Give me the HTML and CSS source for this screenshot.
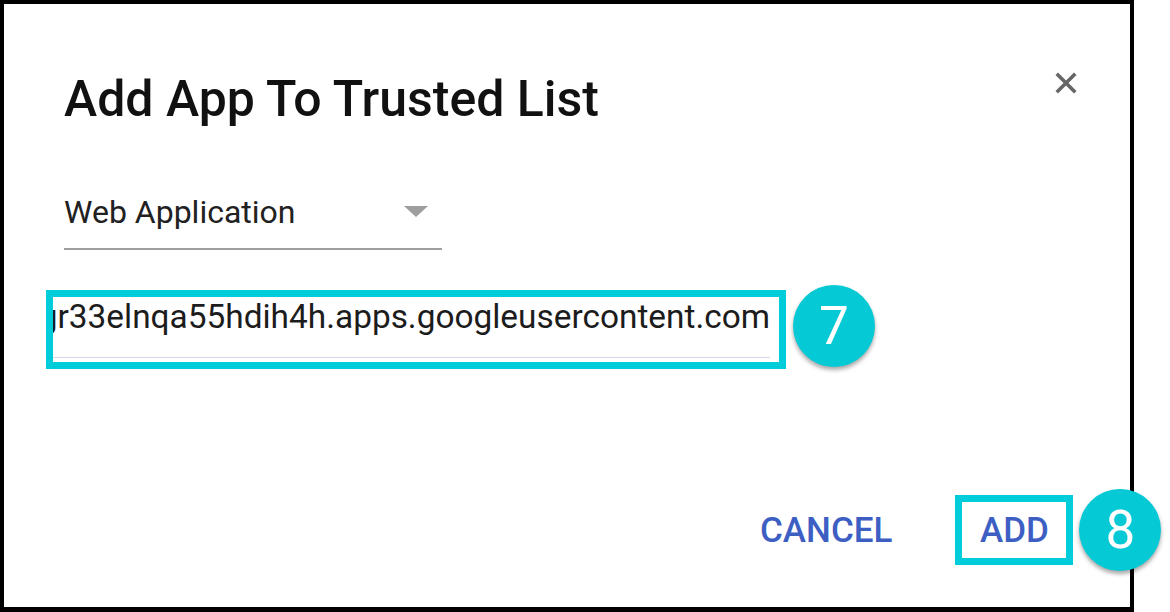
FILE: index.html
```html
<!DOCTYPE html>
<html lang="en">
<head>
  <meta charset="UTF-8" />
  <meta name="viewport" content="width=device-width, initial-scale=1.0"/>
  <title>Add App To Trusted List</title>
  <link rel="stylesheet" href="styles.css">
</head>
<body>
  <div class="frame">
    <div class="dialog-head">
      <h1>Add App To Trusted List</h1>
      <button class="close" aria-label="Close">
        <svg width="22" height="22" viewBox="0 0 22 22">
          <path d="M3 3 L19 19 M19 3 L3 19" stroke="#666" stroke-width="3.6" stroke-linecap="square"/>
        </svg>
      </button>
    </div>

    <div class="select">
      <span>Web Application</span>
      <span class="arrow"></span>
    </div>

    <div class="field-row">
      <div class="field">
        <div class="field-input"><span>40721856093-kt8v2m0sbq1ogr33elnqa55hdih4h.apps.googleusercontent.com</span></div>
      </div>
      <span class="badge badge-7">7</span>
    </div>

    <div class="actions">
      <button class="btn">CANCEL</button>
      <div class="highlight">
        <button class="btn">ADD</button>
      </div>
      <span class="badge badge-8">8</span>
    </div>
  </div>
</body>
</html>
```

FILE: styles.css
```css
* { box-sizing: border-box; }
body {
  margin: 0;
  background: #fff;
  font-family: Roboto, 'Liberation Sans', sans-serif;
}
.frame {
  width: 1134px;
  height: 612px;
  border: 4px solid #000;
  border-bottom-width: 5px;
  padding: 70px 0 0 60px;
  background: #fff;
}
.dialog-head {
  display: flex;
  justify-content: space-between;
  align-items: flex-start;
  margin-right: 53px;
}
h1 {
  margin: 0;
  font-size: 50px;
  line-height: 50px;
  font-weight: 500;
  color: #111;
}
.close {
  background: none;
  border: none;
  padding: 0;
  margin-top: -2px;
  width: 22px;
  height: 22px;
  cursor: pointer;
}
.close svg { display: block; }
.select {
  width: 378px;
  margin-top: 72px;
  padding: 0 14px 20px 0;
  border-bottom: 2px solid #9e9e9e;
  display: flex;
  justify-content: space-between;
  align-items: flex-start;
  font-size: 32px;
  line-height: 32px;
  color: #212121;
}
.arrow {
  margin-top: 10px;
  width: 0;
  height: 0;
  border-left: 12px solid transparent;
  border-right: 12px solid transparent;
  border-top: 11px solid #9e9e9e;
}
.field-row {
  display: flex;
  align-items: flex-start;
  margin: 40px 0 0 -18px;
}
.field {
  width: 740px;
  height: 79px;
  border: 7px solid #00cdd9;
  padding: 4px 0;
  flex-shrink: 0;
}
.field-input {
  height: 57px;
  margin-right: 9px;
  padding-top: 1px;
  border-bottom: 1px solid #d8d6e8;
  display: flex;
  justify-content: flex-end;
  overflow: hidden;
  white-space: nowrap;
  font-size: 33.4px;
  line-height: 30px;
  color: #1c1c1c;
}
.field-input span { flex-shrink: 0; }
.badge {
  width: 82px;
  height: 82px;
  border-radius: 50%;
  background: #06c9d6;
  color: #fff;
  display: flex;
  align-items: center;
  justify-content: center;
  font-size: 53px;
  box-shadow: 0 3px 4px rgba(0,0,0,0.35);
  flex-shrink: 0;
}
.badge-7 {
  margin: -5px 0 0 7px;
}
.actions {
  display: flex;
  align-items: center;
  margin: 120px 0 0 696px;
}
.btn {
  background: none;
  border: none;
  padding: 0;
  font-family: inherit;
  font-size: 35px;
  font-weight: 500;
  color: #3d5fc4;
  cursor: pointer;
  flex-shrink: 0;
}
.highlight {
  margin-left: 63px;
  width: 118px;
  height: 70px;
  border: 7px solid #00cdd9;
  display: flex;
  align-items: center;
  justify-content: center;
  flex-shrink: 0;
}
.badge-8 {
  margin-left: 6px;
}
```
